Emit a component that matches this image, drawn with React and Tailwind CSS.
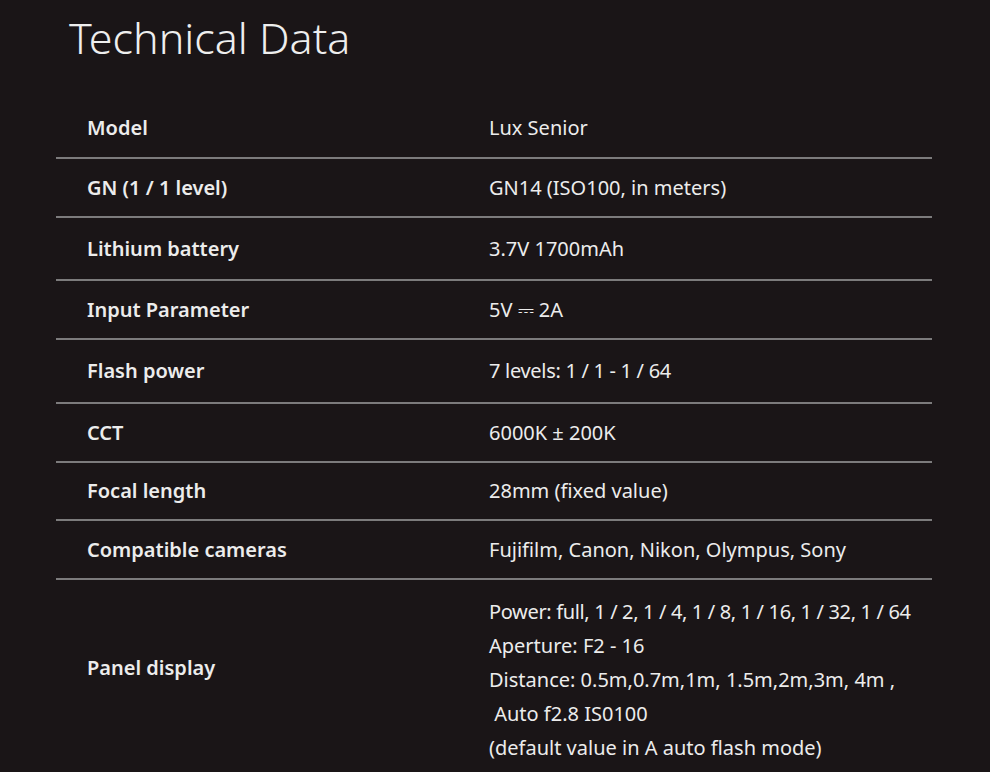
export default function App() {
  const rows = [
    ["Model", "Lux Senior", "h-[61px]", ""],
    ["GN (1 / 1 level)", "GN14 (ISO100, in meters)", "h-[59px]", ""],
    ["Lithium battery", "3.7V 1700mAh", "h-[63px]", ""],
    ["Input Parameter", "5V ⎓ 2A", "h-[59px]", ""],
    ["Flash power", "7 levels: 1 / 1 - 1 / 64", "h-[64px]", "tracking-[-0.3px]"],
    ["CCT", "6000K ± 200K", "h-[59px]", ""],
    ["Focal length", "28mm (fixed value)", "h-[58px]", ""],
    ["Compatible cameras", "Fujifilm, Canon, Nikon, Olympus, Sony", "h-[59px]", ""],
  ];
  return (
    <div className="w-[990px] h-[772px] overflow-hidden bg-[#1a1517] text-[#ececec]" style={{ fontFamily: '"Noto Sans", sans-serif' }}>
      <h1 className="pl-[69px] pt-[9px] h-[98px] text-[43px] font-light leading-[58px] text-[#eeeeee]">Technical Data</h1>
      <div className="ml-[56px] w-[876px]">
        {rows.map(([k, v, h, t], i) => (
          <div key={i} className={`flex items-center ${h} border-b-2 border-[#7c7b7c]`}>
            <div className="w-[433px] pl-[31px] text-[20px] font-semibold">{k}</div>
            <div className={`text-[20px] ${t}`}>{v}</div>
          </div>
        ))}
        <div className="flex items-start pt-[15px]">
          <div className="w-[433px] pl-[31px] text-[20px] font-semibold pt-[58px]">Panel display</div>
          <div className="text-[20px] leading-[34px]">
            <div className="tracking-[-0.35px]">Power: full, 1 / 2, 1 / 4, 1 / 8, 1 / 16, 1 / 32, 1 / 64</div>
            <div>Aperture: F2 - 16</div>
            <div>Distance: 0.5m,0.7m,1m, 1.5m,2m,3m, 4m ,</div>
            <div>&nbsp;Auto f2.8 IS0100</div>
            <div>(default value in A auto flash mode)</div>
          </div>
        </div>
      </div>
    </div>
  );
}
